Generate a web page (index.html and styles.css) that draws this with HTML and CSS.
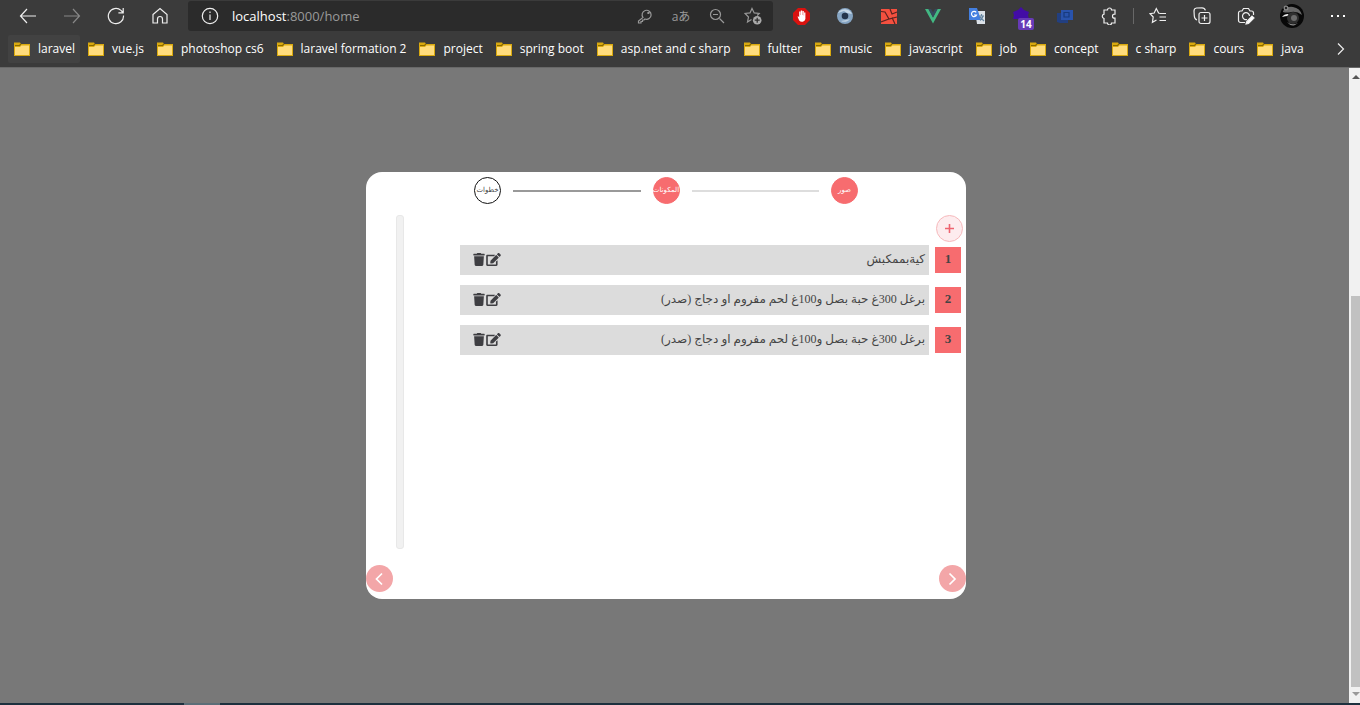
FILE: index.html
```
<!DOCTYPE html>
<html lang="en">
<head>
<meta charset="utf-8">
<title>localhost:8000/home</title>
<link rel="stylesheet" href="styles.css">
</head>
<body>
<svg class="defs" width="0" height="0" aria-hidden="true">
  <symbol id="folder" viewBox="0 0 16 14"><path d="M0 .5h6l1 1.500h9V14H0z" fill="#d9a90f"/><path d="M1 3.500h4.500L7 2" stroke="#8a6a00" fill="none"/><path d="M1 5h5l1.300-1.500H15V13H1z" fill="#ffdc7c"/></symbol>
  <symbol id="trash" viewBox="0 0 448 512"><path d="M432 32H312l-9-19A24 24 0 0 0 281 0H167a24 24 0 0 0-22 13l-9 19H16A16 16 0 0 0 0 48v32a16 16 0 0 0 16 16h416a16 16 0 0 0 16-16V48a16 16 0 0 0-16-16zM53 467a48 48 0 0 0 48 45h246a48 48 0 0 0 48-45l21-339H32z"/></symbol>
  <symbol id="edit" viewBox="0 0 576 512"><path d="M402.600 83.200l90.200 90.200c3.800 3.800 3.800 10 0 13.800L274.400 405.600l-92.800 10.300c-12.400 1.400-22.900-9.100-21.500-21.500l10.300-92.800L388.800 83.200c3.800-3.800 10-3.800 13.800 0zm162-22.900l-48.800-48.800c-15.200-15.200-39.900-15.200-55.200 0l-35.400 35.400c-3.800 3.800-3.800 10 0 13.800l90.200 90.200c3.800 3.800 10 3.800 13.800 0l35.400-35.400c15.200-15.300 15.200-40 0-55.200zM384 346.200V448H64V128h229.800c3.200 0 6.200-1.300 8.500-3.500l40-40c7.600-7.600 2.200-20.500-8.500-20.500H48C21.500 64 0 85.500 0 112v352c0 26.500 21.500 48 48 48h352c26.500 0 48-21.500 48-48V306.200c0-10.700-12.900-16-20.500-8.500l-40 40c-2.200 2.300-3.500 5.300-3.500 8.500z"/></symbol>
</svg>

<header class="browser">
  <div class="toolbar">
    <button class="tool" aria-label="Back"><svg width="18" height="16" viewBox="0 0 18 16"><path d="M17 8H2M8 1L1.500 8 8 15"/></svg></button>
    <button class="tool dim" aria-label="Forward"><svg width="18" height="16" viewBox="0 0 18 16"><path d="M1 8h15M10 1l6.500 7-6.500 7"/></svg></button>
    <button class="tool" aria-label="Reload"><svg width="18" height="18" viewBox="0 0 18 18"><path d="M16.500 8.500A7.600 7.600 0 1 1 14 3.400L16 5.500M16.200 1v4.800h-4.800"/></svg></button>
    <button class="tool" aria-label="Home"><svg width="18" height="18" viewBox="0 0 18 18"><path d="M2 7.500L9 1.500l7 6V16h-4.500v-4a2.500 2.500 0 0 0-5 0v4H2z"/></svg></button>
    <div class="address">
      <svg width="18" height="18" viewBox="0 0 18 18"><circle cx="9" cy="9" r="7.700"/><path d="M9 7.500V13M9 4.500v1.500"/></svg>
      <div class="url" role="textbox" aria-label="Address"><b>localhost</b>:8000/home</div>
      <button class="in-tool" aria-label="Password"><svg width="16" height="16" viewBox="0 0 16 16"><path d="M6 9.500a4.500 4.500 0 1 1 2 1.500L7 12H5.500v1.500H4V15H1.500v-2zM11 4.500h.8v.8H11z"/></svg></button>
      <button class="in-tool aa" aria-label="Translate">aあ</button>
      <button class="in-tool" aria-label="Zoom"><svg width="16" height="16" viewBox="0 0 16 16"><circle cx="6.500" cy="6.500" r="5"/><path d="M10.500 10.500L15 15M4 6.500h5"/></svg></button>
      <button class="in-tool" aria-label="Add to favorites"><svg width="18" height="18" viewBox="0 0 18 18"><path d="M7.500 12.500l-4 2.500 1-5L1 6.500l5-.6L8 1.500l2.200 4.400 5 .6-2 2"/><circle cx="13.200" cy="13.200" r="4.300" fill="#aaa" stroke="none"/><path d="M13.200 10.700v5M10.700 13.200h5" stroke="#2b2b2b"/></svg></button>
    </div>
    <button class="tool" aria-label="Ad blocker"><svg width="17" height="17" viewBox="0 0 17 17" stroke="none"><path d="M5 0h7l5 5v7l-5 5H5l-5-5V5z" fill="#d9120f"/><path d="M4.500 8.500l1.200 0 .5 1V3.500h1.300V7h.3V2.500h1.400V7h.3V3h1.300v4.500h.3V4.500h1.300V11a3.500 3.500 0 0 1-6.200 1.500z" fill="#fff"/></svg></button>
    <button class="tool" aria-label="Extension"><svg width="18" height="18" viewBox="0 0 18 18" stroke="none"><circle cx="9" cy="9" r="8" fill="#86a5c3"/><path d="M2 6a8 8 0 0 1 14 1l-5-1-3-2z" fill="#c6d7e6"/><circle cx="9" cy="9" r="3.300" fill="#24354c"/><path d="M5 14a7 7 0 0 0 9-2l-4 1z" fill="#bfd0df"/></svg></button>
    <button class="tool" aria-label="Laravel"><svg width="17" height="17" viewBox="0 0 17 17"><path d="M0 1h16v15H0z" fill="#f4503f" stroke="none"/><path d="M0 3.500l4 .5 4 7 8-2M9 1l2 5 5-2M0 14l8-3M11 9.500l3 6.500" stroke="#5c2320"/></svg></button>
    <button class="tool" aria-label="Vue"><svg width="18" height="15" viewBox="0 0 18 15" stroke="none"><path d="M1 0h3.500L9 8.500 13.500 0H17L9 14.500z" fill="#42b883"/><path d="M4.500 0H7l2 3.500L11 0h2.500L9 8.500z" fill="#35495e"/></svg></button>
    <button class="tool" aria-label="Translate page"><svg width="18" height="18" viewBox="0 0 18 18" stroke="none"><path d="M7 4h10v13H9z" fill="#dce2e8"/><path d="M1 1h8l4 12H1z" fill="#437fe0"/><path d="M8.200 5.400A2.600 2.600 0 1 0 8.500 8H6" fill="none" stroke="#fff"/><path d="M11 9h5M13.500 7v2M15 9c-.5 2-2 4-3 4.500M12 10l4 4" fill="none" stroke="#6585a0"/></svg></button>
    <button class="tool counter" aria-label="Extension, 14 items"><svg width="18" height="18" viewBox="0 0 18 18" stroke="none"><path d="M9 0l3 3 5 2-1 3 1 4H1l1-4-1-3 5-2z" fill="#420ca6"/></svg><span class="count">14</span></button>
    <button class="tool" aria-label="Capture"><svg width="17" height="15" viewBox="0 0 17 15" stroke="none"><path d="M0 4h11v10H3l-3-1z" fill="#223f80"/><path d="M4 1h12v10H4z" fill="#2953ac"/><path d="M7 3.500h5v4.500H7z" fill="none" stroke="#173a7d"/></svg></button>
    <button class="tool" aria-label="Extensions"><svg width="18" height="18" viewBox="0 0 18 18"><path d="M4 3h3.500a2 2 0 0 1 4 0H15v4.200h-.5a2 2 0 0 0 0 4h.5V16h-3.500a2 2 0 0 1-4 0H4v-4.500a2.200 2.200 0 0 1 0-4.300z"/></svg></button>
    <span class="divider"></span>
    <button class="tool" aria-label="Favorites"><svg width="18" height="18" viewBox="0 0 18 18"><path d="M10.500 6.300L9.600 6 7.300 1.500 5.200 6 1 6.700 4.200 10l-.8 5.300L7.500 13M10.500 6.500H17M10.500 10H17M10.500 13.500H17"/></svg></button>
    <button class="tool" aria-label="Collections"><svg width="18" height="18" viewBox="0 0 18 18"><rect x="6" y="5.500" width="11" height="11" rx="2"/><path d="M11.500 8v6M8.500 11h6M4 13C2 12.500 1.500 11 1.300 9L1 4c0-2 1-2.800 2.500-3L9 .8c2 0 3 1 3.400 2.500"/></svg></button>
    <button class="tool" aria-label="Screenshot"><svg width="18" height="18" viewBox="0 0 18 18"><path d="M8 15.500H3.500a2 2 0 0 1-2-2V6a2 2 0 0 1 2-2H5l1.500-2.500h5L13 4h1.500a2 2 0 0 1 2 2v2M10 12.500a3.500 3.500 0 1 1 2.500-3.500"/><path d="M9.500 15l5.500-6 2 2-5.500 5.500-2.500.5z" fill="#fff"/></svg></button>
    <button class="tool profile" aria-label="Profile"><svg width="24" height="24" viewBox="0 0 24 24" stroke="none"><circle cx="12" cy="12" r="12" fill="#080808"/><path d="M3 7q4-5 10-4 7 1 9 8-5-4-11-3-4 1-8 0z" fill="#686868"/><circle cx="6" cy="4" r="2.500" fill="#8a8a8a"/><circle cx="6" cy="4" r="1.200" fill="#222"/><path d="M2 13q2-3 6-3l2 1-2 1q-3 0-6 1z" fill="#eee"/><circle cx="13" cy="14" r="6" fill="#303030"/><circle cx="14" cy="14" r="3" fill="#6c6c6c"/><path d="M7 18q5 4 11 1l-3 2q-4 2-8-3z" fill="#888"/></svg></button>
    <button class="tool" aria-label="Settings and more"><svg width="16" height="4" viewBox="0 0 16 4"><path d="M1 1h2v2H1zM7 1h2v2H7zM13 1h2v2h-2z" fill="#fff" stroke="none"/></svg></button>
  </div>
  <nav class="bookmarks" aria-label="Bookmarks">
    <a class="current" href="#"><svg><use href="#folder"/></svg>laravel</a>
    <a href="#"><svg><use href="#folder"/></svg>vue.js</a>
    <a href="#"><svg><use href="#folder"/></svg>photoshop cs6</a>
    <a href="#"><svg><use href="#folder"/></svg>laravel formation 2</a>
    <a href="#"><svg><use href="#folder"/></svg>project</a>
    <a href="#"><svg><use href="#folder"/></svg>spring boot</a>
    <a href="#"><svg><use href="#folder"/></svg>asp.net and c sharp</a>
    <a href="#"><svg><use href="#folder"/></svg>fultter</a>
    <a href="#"><svg><use href="#folder"/></svg>music</a>
    <a href="#"><svg><use href="#folder"/></svg>javascript</a>
    <a href="#"><svg><use href="#folder"/></svg>job</a>
    <a href="#"><svg><use href="#folder"/></svg>concept</a>
    <a href="#"><svg><use href="#folder"/></svg>c sharp</a>
    <a href="#"><svg><use href="#folder"/></svg>cours</a>
    <a href="#"><svg><use href="#folder"/></svg>java</a>
    <button class="more" aria-label="More bookmarks"><svg width="8" height="14" viewBox="0 0 8 14"><path d="M1 1.500L6.500 7 1 12.500"/></svg></button>
  </nav>
</header>

<div class="viewport">
  <main class="page">
    <section class="dialog" dir="rtl" lang="ar">
      <div class="steps">
        <span class="step done">صور</span>
        <span class="line"></span>
        <span class="step done">المكونات</span>
        <span class="line reached"></span>
        <span class="step">خطوات</span>
      </div>
      <div class="content">
        <div class="ingredients">
          <button class="add" aria-label="إضافة"><svg width="9" height="9" viewBox="0 0 9 9"><path d="M4.500 0v9M0 4.500h9" stroke="#ee6470" stroke-width="1.600"/></svg></button>
          <div class="row"><span class="number">1</span><div class="bar"><span>كيةبممكبش</span><span class="actions"><button aria-label="تعديل"><svg width="15" height="13"><use href="#edit"/></svg></button><button aria-label="حذف"><svg width="12" height="13"><use href="#trash"/></svg></button></span></div></div>
          <div class="row"><span class="number">2</span><div class="bar"><span>برغل 300غ حبة بصل و100غ لحم مفروم او دجاج (صدر)</span><span class="actions"><button aria-label="تعديل"><svg width="15" height="13"><use href="#edit"/></svg></button><button aria-label="حذف"><svg width="12" height="13"><use href="#trash"/></svg></button></span></div></div>
          <div class="row"><span class="number">3</span><div class="bar"><span>برغل 300غ حبة بصل و100غ لحم مفروم او دجاج (صدر)</span><span class="actions"><button aria-label="تعديل"><svg width="15" height="13"><use href="#edit"/></svg></button><button aria-label="حذف"><svg width="12" height="13"><use href="#trash"/></svg></button></span></div></div>
        </div>
        <div class="inner-track"></div>
      </div>
      <div class="pager">
        <button aria-label="السابق"><svg width="9" height="14" viewBox="0 0 9 14"><path d="M1.500 1.500L7 7l-5.500 5.500"/></svg></button>
        <button aria-label="التالي"><svg width="9" height="14" viewBox="0 0 9 14"><path d="M7 1.500L1.500 7 7 12.500"/></svg></button>
      </div>
    </section>
  </main>
  <div class="scrollbar" aria-hidden="true">
    <svg width="8" height="4" viewBox="0 0 8 4"><path d="M0 4l4-4 4 4z" fill="#555"/></svg>
    <div class="thumb"></div>
    <svg width="8" height="4" viewBox="0 0 8 4"><path d="M0 0h8L4 4z" fill="#999"/></svg>
  </div>
</div>
<footer class="taskbar"><div class="task"></div></footer>
</body>
</html>
```

FILE: styles.css
```
* { box-sizing: border-box; }
body {
  margin: 0;
  height: 100vh;
  display: flex;
  flex-direction: column;
  overflow: hidden;
  background: #787878;
  font-family: "Open Sans", "Noto Sans", "Noto Sans CJK JP", sans-serif;
}
button {
  margin: 0;
  padding: 0;
  border: 0;
  background: none;
  color: inherit;
  font: inherit;
  cursor: pointer;
}
svg { display: block; flex: none; }
.defs { position: absolute; }

/* Browser chrome */
.browser {
  flex: none;
  background: #3b3b3b;
  color: #fff;
  border-bottom: 1px solid #686868;
}
.browser svg { fill: none; stroke: #eee; stroke-width: 1.200; }
.browser svg[stroke="none"] { stroke: none; }
.toolbar {
  display: flex;
  align-items: center;
  height: 32px;
  padding-left: 6px;
}
.tool {
  width: 44px;
  height: 32px;
  display: flex;
  align-items: center;
  justify-content: center;
  flex: none;
}
.browser .dim svg { stroke: #888; }
.tool.profile { width: 48px; }
.address {
  flex: 1;
  height: 30px;
  margin: 0 6px;
  padding: 0 2px 0 13px;
  display: flex;
  align-items: center;
  background: #2b2b2b;
  border-radius: 3px;
}
.url {
  flex: 1;
  margin-left: 13px;
  font-size: 13px;
  color: #9a9a9a;
}
.url b { font-weight: 400; color: #fff; }
.address .in-tool {
  width: 36px;
  height: 30px;
  display: flex;
  align-items: center;
  justify-content: center;
  color: #999;
}
.address .in-tool svg { stroke: #999; }
.address .aa { font-size: 12px; }
.counter { position: relative; }
.count {
  position: absolute;
  left: 19px;
  top: 18px;
  width: 16px;
  height: 12px;
  border-radius: 2px;
  background: #673ab7;
  font-size: 10px;
  font-weight: 700;
  line-height: 12px;
  text-align: center;
}
.divider { width: 1px; height: 16px; margin: 0 2px; background: #686868; }
.bookmarks {
  display: flex;
  align-items: center;
  height: 35px;
  padding: 0 8px 2px;
  font-size: 12px;
}
.bookmarks a {
  display: flex;
  align-items: center;
  gap: 8px;
  height: 28px;
  margin-right: 2px;
  padding: 0 5px 0 6px;
  border-radius: 2px;
  color: #fff;
  text-decoration: none;
  white-space: nowrap;
}
.bookmarks a svg { width: 16px; height: 14px; stroke: none; }
.bookmarks .current { background: #424242; }
.bookmarks .more { margin-left: auto; padding: 0 7px; }

/* Page area */
.viewport { flex: 1; display: flex; min-height: 0; }
.page {
  flex: 1;
  display: flex;
  flex-direction: column;
  align-items: center;
  padding: 104px 17px 0 0;
}
.dialog {
  width: 600px;
  max-width: 100%;
  padding: 5px 0 7px;
  border-radius: 16px;
  background: #fff;
  color: #444;
  font-family: "Liberation Serif", "DejaVu Sans", serif;
}
.steps {
  display: flex;
  align-items: center;
  gap: 12px;
  width: 64%;
  margin: 0 auto;
}
.step {
  width: 27px;
  height: 27px;
  flex: none;
  display: flex;
  align-items: center;
  justify-content: center;
  padding-bottom: 2px;
  border: 1px solid #111;
  border-radius: 50%;
  font-size: 7px;
  white-space: nowrap;
}
.step.done {
  border-color: #f76c6f;
  background: #f76c6f;
  color: #fff;
}
.line { flex: 1; height: 2px; background: #ddd; }
.line.reached { background: #999; }
.content {
  display: flex;
  min-height: 334px;
  margin-top: 11px;
  padding: 0 3px 0 30px;
}
.ingredients { flex: 1; }
.add {
  width: 27px;
  height: 27px;
  display: flex;
  align-items: center;
  justify-content: center;
  margin-bottom: 3px;
  border: 1px solid #f6b9bc;
  border-radius: 50%;
  background: #fdecee;
}
.row {
  display: flex;
  align-items: center;
  gap: 6px;
  margin: 0 2px 10px 56px;
}
.number {
  width: 26px;
  height: 26px;
  flex: none;
  background: #f76c6f;
  font-size: 13px;
  font-weight: 700;
  line-height: 24px;
  text-align: center;
}
.bar {
  flex: 1;
  height: 30px;
  display: flex;
  align-items: center;
  justify-content: space-between;
  padding: 0 4px 2px 13px;
  background: #dcdcdc;
  font-size: 12px;
}
.actions { display: flex; gap: 1px; color: #3e3e42; }
.actions svg { fill: currentColor; }
.inner-track {
  width: 8px;
  border: 1px solid #e8e8e8;
  border-radius: 3px;
  background: #f1f1f1;
}
.pager { display: flex; justify-content: space-between; margin-top: 16px; }
.pager button {
  width: 27px;
  height: 27px;
  display: flex;
  align-items: center;
  justify-content: center;
  border-radius: 50%;
  background: #f3a6a8;
}
.pager svg { fill: none; stroke: #fff; stroke-width: 1.700; }

.scrollbar {
  width: 11px;
  display: flex;
  flex-direction: column;
  align-items: flex-end;
  padding: 7px 0;
  background: #f1f1f1;
}
.thumb {
  width: 9px;
  height: 391px;
  margin: auto 0 5px;
  background: #c1c1c1;
}
.taskbar { flex: none; height: 2px; padding-left: 184px; background: #1d303e; }
.task { width: 36px; height: 2px; background: #5c6e78; }
```
